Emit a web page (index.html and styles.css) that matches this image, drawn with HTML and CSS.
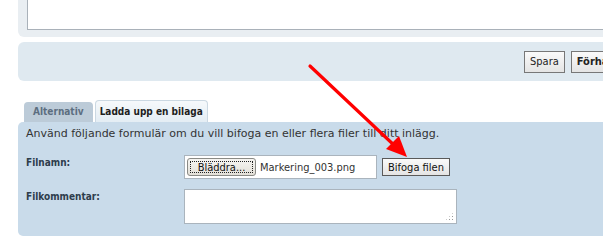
FILE: index.html
```html
<!DOCTYPE html>
<html lang="sv">
<head>
  <meta charset="UTF-8">
  <title>Ladda upp en bilaga</title>
  <link rel="stylesheet" href="styles.css">
</head>
<body>
  <div class="wrap">
    <div class="editor-box">
      <textarea class="editor"></textarea>
    </div>

    <div class="button-bar">
      <button class="btn">Spara</button>
      <button class="btn btn-main">Förhandsgranska</button>
    </div>

    <div class="tabs">
      <div class="tab">Alternativ</div>
      <div class="tab tab-active">Ladda upp en bilaga</div>
    </div>

    <div class="tab-panel">
      <p class="intro">Använd följande formulär om du vill bifoga en eller flera filer till ditt inlägg.</p>

      <div class="row">
        <label class="row-label">Filnamn:</label>
        <div class="row-field">
          <div class="file-box">
            <span class="browse"><span class="browse-inner">Bläddra...</span></span>
            <span class="file-name">Markering_003.png</span>
          </div>
          <button class="btn btn-attach">Bifoga filen</button>
        </div>
      </div>

      <div class="row">
        <label class="row-label">Filkommentar:</label>
        <div class="row-field">
          <div class="comment">
            <span class="grip"></span>
          </div>
        </div>
      </div>
    </div>
  </div>

  <!-- red arrow drawn over the screenshot -->
  <svg class="arrow" width="603" height="249" viewBox="0 0 603 249">
    <line x1="310" y1="66" x2="396" y2="147" stroke="#f00" stroke-width="3.2" stroke-linecap="round"/>
    <polygon points="407,157 386,149 399,136" fill="#f00"/>
  </svg>
</body>
</html>
```

FILE: styles.css
```css
body {
  margin: 0;
  width: 603px;
  height: 249px;
  overflow: hidden;
  font-family: "DejaVu Sans", Verdana, sans-serif;
  font-stretch: condensed;
  font-size: 11px;
  color: #333;
  background: #fff;
  position: relative;
}

.wrap {
  width: 700px;
  padding-left: 18px;
}

.editor-box {
  background: #e9eef2;
  height: 30px;
  padding: 0 0 7px 9px;
  border-bottom-left-radius: 6px;
}

.editor {
  display: block;
  box-sizing: border-box;
  width: 100%;
  height: 30px;
  margin: 0;
  border: 1px solid #a9b1b9;
  border-top: none;
  border-right: none;
  background: #fff;
  resize: none;
}

.button-bar {
  display: flex;
  align-items: center;
  gap: 6px;
  margin-top: 5px;
  height: 39px;
  padding-left: 506px;
  background: #dfe9f0;
  border-radius: 6px 0 0 6px;
}

.btn {
  font-family: inherit;
  font-stretch: condensed;
  font-size: 11px;
  color: #222;
  height: 22px;
  padding: 0 5px;
  border: 1px solid #777;
  background: linear-gradient(#fafafa, #e4e4e4);
  border-radius: 0;
  white-space: nowrap;
}

.btn-main {
  font-weight: bold;
}

.tabs {
  display: flex;
  align-items: flex-end;
  gap: 2px;
  margin-top: 19px;
  padding-left: 6px;
}

.tab {
  box-sizing: border-box;
  height: 20px;
  padding: 0 9px;
  line-height: 20px;
  font-size: 10px;
  font-weight: bold;
  color: #5c6e80;
  background: #bccbd8;
  border-radius: 4px 4px 0 0;
}

.tab-active {
  height: 22px;
  padding: 0 4px;
  line-height: 21px;
  color: #1e1e1e;
  background: linear-gradient(#f6f9fb, #e4edf4);
  border: 1px solid #cbd8e2;
  border-bottom: none;
}

.tab-panel {
  background: #c9dbea;
  height: 114px;
  box-sizing: border-box;
  padding: 4px 0 0 8px;
  border-radius: 5px 0 0 5px;
}

.intro {
  margin: 0 0 14px;
  font-size: 11px;
  font-stretch: normal;
  line-height: 15px;
  color: #333;
}

.row {
  display: flex;
  margin-bottom: 10px;
}

.row-label {
  width: 158px;
  padding-top: 2px;
  font-size: 10px;
  font-weight: bold;
  color: #2e3d4c;
}

.row-field {
  display: flex;
  align-items: center;
  gap: 5px;
}

.file-box {
  box-sizing: border-box;
  width: 193px;
  height: 24px;
  display: flex;
  align-items: center;
  gap: 4px;
  padding-left: 2px;
  background: #fff;
  border: 1px solid #aab4bd;
}

.browse {
  box-sizing: border-box;
  height: 18px;
  width: 69px;
  padding: 2px;
  border: 1px solid #8a8a86;
  border-radius: 3px;
  background: linear-gradient(#f6f5f2, #e3e0d8);
}

.browse-inner {
  display: flex;
  align-items: center;
  justify-content: center;
  height: 100%;
  box-sizing: border-box;
  border: 1px dotted #222;
  color: #111;
  font-size: 11px;
}

.file-name {
  color: #333;
  font-size: 11px;
}

.btn-attach {
  height: 18px;
  width: 68px;
  padding: 0;
  border-color: #5a5a5a;
  color: #111;
}

.comment {
  position: relative;
  box-sizing: border-box;
  width: 273px;
  height: 35px;
  background: #fff;
  border: 1px solid #aab4bd;
}

.grip {
  position: absolute;
  right: 2px;
  bottom: 2px;
  width: 9px;
  height: 9px;
  background:
    radial-gradient(circle, #999 0.6px, transparent 0.9px) 0 0 / 3px 3px;
  clip-path: polygon(100% 0, 100% 100%, 0 100%);
}

.arrow {
  position: absolute;
  left: 0;
  top: 0;
  pointer-events: none;
}
```
